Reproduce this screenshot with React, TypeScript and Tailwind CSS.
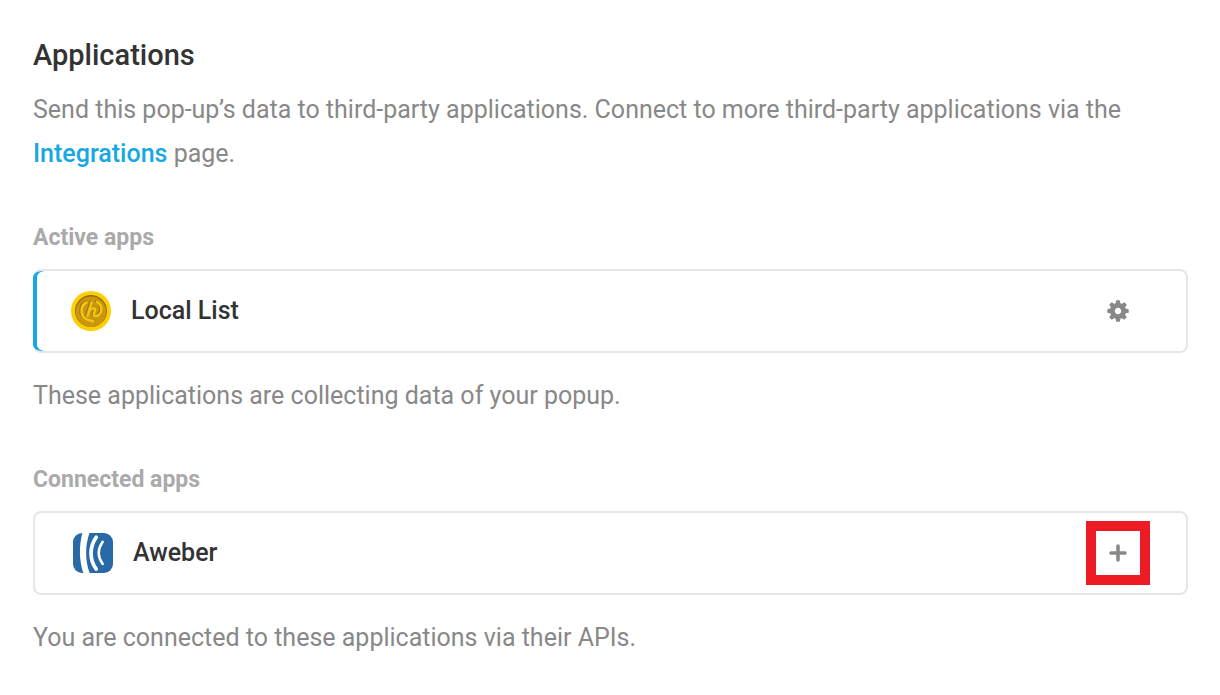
import type { ReactNode } from "react";

const TOOTH_ANGLES = [0, 45, 90, 135, 180, 225, 270, 315];

const COIN_MARK = [
  // left sweep of the ring, down into the tail
  "M15.500 11.500C9.500 14 8.800 24 14.500 27.800c2.200 1.500 5.200 1.400 7.500 2.600",
  // stem and shoulder of the h
  "M20.500 11.500 16.500 25",
  "M17.800 20.500c1.700-3 6.200-4.600 6.200-1.800 0 2-2.400 5.500-.4 6.200 3.300.9 7-2.500 6.800-6.800-.1-3.200-1.700-5.700-4.300-7",
];

function CoinLogo() {
  return (
    <svg viewBox="0 0 40 40" className="size-10 shrink-0" aria-hidden="true">
      <circle cx="20" cy="20" r="20" fill="#fdcf03" />
      <circle cx="20" cy="20" r="16" fill="#93690c" />
      <circle cx="20" cy="20.700" r="15.200" fill="#c8960f" />
      {/* shadow first, then the raised mark */}
      <g fill="none" strokeLinecap="round" strokeLinejoin="round" strokeWidth="2.500">
        <g stroke="#a0720d" transform="translate(-1 -.6)">
          {COIN_MARK.map((d) => (
            <path key={d} d={d} />
          ))}
        </g>
        <g stroke="#f4c610">
          {COIN_MARK.map((d) => (
            <path key={d} d={d} />
          ))}
        </g>
      </g>
    </svg>
  );
}

function AweberLogo() {
  return (
    <svg viewBox="0 0 40 40" className="size-10 shrink-0" aria-hidden="true">
      <rect width="40" height="40" rx="9" fill="#2869a7" />
      <path d="M9.300 0h7.200C12 12 12 28 16.700 40h-6.400C6 27 6 13 9.300 0z" fill="#fff" />
      <g fill="none" stroke="#fff" strokeLinecap="round">
        <path d="M23.200 4.300C16.300 13.500 16.300 27 23.200 36" strokeWidth="3.700" />
        <path d="M29.700 8.800C24.600 16 24.600 24 29.700 31" strokeWidth="2.500" />
      </g>
    </svg>
  );
}

function GearIcon() {
  return (
    <svg viewBox="-11 -11 22 22" className="size-[22px]" aria-hidden="true">
      <circle r="5.600" fill="none" stroke="#888" strokeWidth="4.800" />
      {TOOTH_ANGLES.map((angle) => (
        <path key={angle} d="M-2.500-7-1.800-10.700h3.600L2.500-7z" fill="#888" transform={`rotate(${angle})`} />
      ))}
    </svg>
  );
}

function PlusIcon() {
  return (
    <svg viewBox="0 0 18 18" className="size-[18px]" aria-hidden="true">
      <path d="M9 2v14M2 9h14" fill="none" stroke="#888" strokeWidth="3.600" strokeLinecap="round" />
    </svg>
  );
}

interface AppSectionProps {
  title: string;
  note: string;
  children: ReactNode;
}

function AppSection({ title, note, children }: AppSectionProps) {
  return (
    <section className="mt-10">
      <h3 className="text-[23px] leading-[44px] font-bold text-[#aaa]">{title}</h3>
      <div className="mt-[9px]">{children}</div>
      <p className="mt-[21px] text-[25px] leading-[44px] text-[#888]">{note}</p>
    </section>
  );
}

export default function App() {
  return (
    <main className="bg-white py-[33px] pr-8 pl-[33px] font-['Roboto',sans-serif] text-[#333]">
      <h2 className="text-[29px] leading-[45px] font-medium">Applications</h2>
      <p className="mt-2.5 text-[25px] leading-[44px] text-[#888]">
        Send this pop-up’s data to third-party applications. Connect to more third-party applications via the{" "}
        <a href="#integrations" className="font-medium text-[#17a8e3]">
          Integrations
        </a>{" "}
        page.
      </p>

      <AppSection title="Active apps" note="These applications are collecting data of your popup.">
        <div className="flex h-21 items-center gap-5 rounded-lg border-2 border-l-0 border-[#e6e6e6] pr-9 pl-[38px] shadow-[inset_4px_0_0_0_#17a8e3]">
          <CoinLogo />
          <span className="flex-1 text-[25px] font-medium">Local List</span>
          <button type="button" aria-label="Configure Local List" className="flex size-16 items-center justify-center">
            <GearIcon />
          </button>
        </div>
      </AppSection>

      <AppSection title="Connected apps" note="You are connected to these applications via their APIs.">
        <div className="flex h-21 items-center gap-5 rounded-lg border-2 border-[#e6e6e6] pr-9 pl-[38px]">
          <AweberLogo />
          <span className="flex-1 text-[25px] font-medium">Aweber</span>
          <button
            type="button"
            aria-label="Activate Aweber"
            className="flex size-16 items-center justify-center border-10 border-[#ed1c24]"
          >
            <PlusIcon />
          </button>
        </div>
      </AppSection>
    </main>
  );
}
